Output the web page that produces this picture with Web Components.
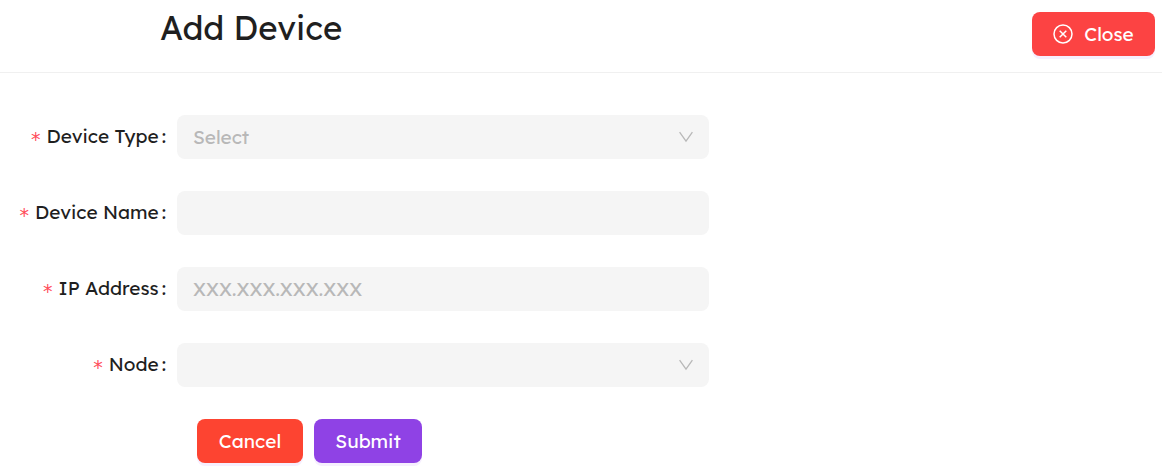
<!DOCTYPE html>
<html lang="en">
<head>
<meta charset="utf-8">
<title>Add Device</title>
<style>
  body { margin: 0; background: #fff; color: #1f1f1f; font-family: Lexend, Inter, "Open Sans", sans-serif; font-size: 19px; line-height: 28px; }
</style>
</head>
<body>
<device-page></device-page>
<script>
class BaseElement extends HTMLElement {
  render(html) {
    const t = document.createElement('template');
    t.innerHTML = html;
    this.attachShadow({ mode: 'open' }).append(t.content.cloneNode(true));
  }
}

class AppButton extends BaseElement {
  connectedCallback() {
    if (this.shadowRoot) return;
    this.render(`
      <style>
        :host { display: inline-block; }
        button { display: flex; align-items: center; justify-content: center; gap: 11px; width: 100%; height: 44px; padding: 0 20px; border: 0; border-radius: 8px; background: var(--button-color, #8f42e5); color: #fff; font: inherit; white-space: nowrap; box-shadow: 0 3px 0 #f6effe; cursor: pointer; }
        ::slotted(svg) { display: block; flex: none; }
      </style>
      <button type="button"><slot name="icon"></slot><slot></slot></button>`);
  }
}

class PageHeader extends BaseElement {
  connectedCallback() {
    if (this.shadowRoot) return;
    this.render(`
      <style>
        :host { display: block; }
        header { display: flex; align-items: flex-start; justify-content: space-between; padding: 0 7px 16px 160px; border-bottom: 1px solid #f0f0f0; }
        h1 { margin: 0; font-size: 33px; line-height: 56px; font-weight: 400; }
        .actions { padding-top: 12px; }
      </style>
      <header><h1><slot></slot></h1><div class="actions"><slot name="actions"></slot></div></header>`);
  }
}

class FormField extends BaseElement {
  connectedCallback() {
    if (this.shadowRoot) return;
    const hint = this.getAttribute('placeholder') || '';
    const control = this.getAttribute('type') === 'select'
      ? `<select id="control" required><option value="">${hint}</option></select>
         <svg width="14" height="14" viewBox="0 0 14 14" fill="none" stroke="#b8b8b8" stroke-width="1.3" aria-hidden="true"><path d="M.6 2.2 7 11.2l6.400-9"/></svg>`
      : `<input id="control" type="text" placeholder="${hint}" required>`;
    this.render(`
      <style>
        :host { display: grid; grid-template-columns: 177px minmax(0, 532px); align-items: center; }
        label { display: flex; justify-content: flex-end; padding-right: 11px; white-space: nowrap; }
        .mark { margin-right: 6px; padding-top: 3px; color: #ff4d5a; font-family: "DejaVu Sans", sans-serif; }
        .colon { margin-left: 3px; }
        .box { display: grid; align-items: center; }
        input, select { grid-area: 1 / 1; box-sizing: border-box; width: 100%; height: 44px; margin: 0; padding: 0 16px; border: 0; border-radius: 8px; background: #f5f5f5; color: #b8b8b8; font: inherit; appearance: none; }
        input { color: #1f1f1f; }
        input::placeholder { color: #b8b8b8; opacity: 1; }
        svg { grid-area: 1 / 1; justify-self: end; margin-right: 16px; pointer-events: none; }
      </style>
      <label for="control"><span class="mark">*</span><span>${this.getAttribute('label')}</span><span class="colon">:</span></label>
      <div class="box">${control}</div>`);
  }
}

class DevicePage extends BaseElement {
  connectedCallback() {
    if (this.shadowRoot) return;
    this.render(`
      <style>
        :host { display: block; }
        form { display: flex; flex-direction: column; gap: 32px; padding: 42px 0 9px; }
        .buttons { display: flex; gap: 11px; padding-left: 197px; }
        .close { --button-color: #fc4343; width: 123px; }
        .cancel { --button-color: #fd4431; width: 106px; }
        .submit { width: 108px; }
      </style>
      <page-header>Add Device
        <app-button class="close" slot="actions">
          <svg slot="icon" width="20" height="20" viewBox="0 0 20 20" fill="none" stroke="#fff" stroke-width="1.5" aria-hidden="true"><circle cx="10" cy="10" r="9"/><path d="m6.700 6.700 6.600 6.600m0-6.600-6.600 6.600"/></svg>Close</app-button>
      </page-header>
      <form>
        <form-field type="select" label="Device Type" placeholder="Select"></form-field>
        <form-field label="Device Name"></form-field>
        <form-field label="IP Address" placeholder="XXX.XXX.XXX.XXX"></form-field>
        <form-field type="select" label="Node"></form-field>
        <div class="buttons"><app-button class="cancel">Cancel</app-button><app-button class="submit">Submit</app-button></div>
      </form>`);
  }
}

customElements.define('app-button', AppButton);
customElements.define('page-header', PageHeader);
customElements.define('form-field', FormField);
customElements.define('device-page', DevicePage);
</script>
</body>
</html>
